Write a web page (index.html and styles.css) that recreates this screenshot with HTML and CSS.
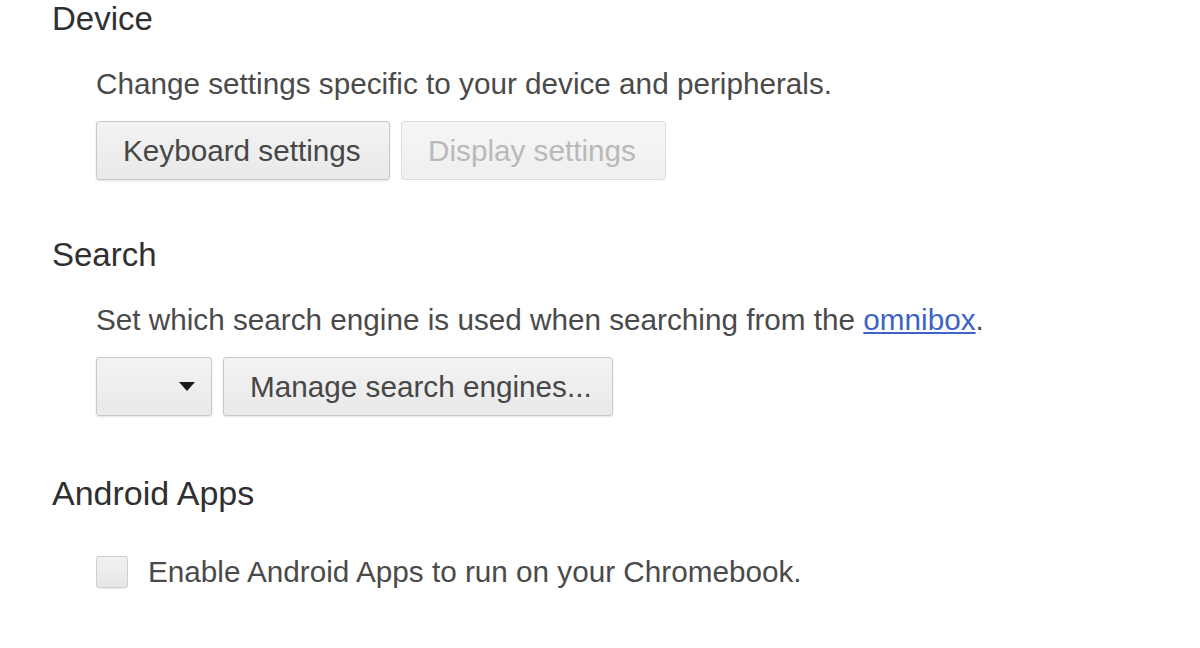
FILE: index.html
```html
<!DOCTYPE html>
<html lang="en">
<head>
    <meta charset="UTF-8">
    <title>Settings</title>
    <link rel="stylesheet" href="styles.css">
</head>
<body>
    <section class="settings-section">
        <h2>Device</h2>
        <div class="section-body">
            <div class="description">Change settings specific to your device and peripherals.</div>
            <div class="button-row">
                <button class="btn keyboard-btn">Keyboard settings</button>
                <button class="btn display-btn" disabled>Display settings</button>
            </div>
        </div>
    </section>

    <section class="settings-section search-section">
        <h2>Search</h2>
        <div class="section-body">
            <div class="description">Set which search engine is used when searching from the <a href="#">omnibox</a>.</div>
            <div class="button-row">
                <div class="btn select-box"><span class="arrow"></span></div>
                <button class="btn manage-btn">Manage search engines...</button>
            </div>
        </div>
    </section>

    <section class="settings-section android-section">
        <h2>Android Apps</h2>
        <div class="section-body">
            <label class="checkbox-row">
                <span class="checkbox"></span>
                <span>Enable Android Apps to run on your Chromebook.</span>
            </label>
        </div>
    </section>
</body>
</html>
```

FILE: styles.css
```css
body {
    font-family: 'Liberation Sans', Arial, sans-serif;
    margin: 0;
    padding: 0 0 0 52px;
    background-color: #fff;
    color: #4a4a4a;
}

h2 {
    margin: 0;
    font-size: 33px;
    font-weight: normal;
    line-height: 38px;
    color: #303030;
}

.search-section {
    margin-top: 56px;
}

.android-section {
    margin-top: 58px;
}

.android-section h2 {
    font-size: 34px;
}

.section-body {
    padding-left: 44px;
}

.description {
    font-size: 29.7px;
    line-height: 36px;
    margin-top: 28px;
}

.description a {
    color: #3d63c6;
    text-decoration: underline;
}

.button-row {
    display: flex;
    gap: 11px;
    margin-top: 19px;
}

.btn {
    font-family: inherit;
    font-size: 29.7px;
    height: 59px;
    padding: 0 26px;
    color: #474747;
    white-space: nowrap;
    background: linear-gradient(#f3f3f3, #e9e9e9);
    border: 1px solid #c9c9c9;
    border-radius: 3px;
    box-shadow: 0 1px 2px rgba(0, 0, 0, 0.12);
    display: flex;
    align-items: center;
    box-sizing: border-box;
}

.keyboard-btn {
    width: 294px;
}

.display-btn {
    width: 265px;
    color: #b9b9b9;
    background: linear-gradient(#f6f6f6, #efefef);
    border-color: #dcdcdc;
    box-shadow: none;
}

.select-box {
    width: 116px;
    justify-content: flex-end;
    padding-right: 16px;
}

.arrow {
    width: 0;
    height: 0;
    border-left: 8px solid transparent;
    border-right: 8px solid transparent;
    border-top: 9px solid #1a1a1a;
}

.manage-btn {
    width: 390px;
}

.checkbox-row {
    display: flex;
    align-items: center;
    gap: 20px;
    margin-top: 42px;
    font-size: 29.7px;
    line-height: 36px;
}

.checkbox {
    width: 32px;
    height: 32px;
    box-sizing: border-box;
    border: 1px solid #cfcfcf;
    border-radius: 3px;
    background: linear-gradient(#f2f2f2, #e6e6e6);
    box-shadow: 0 1px 1px rgba(0, 0, 0, 0.08);
}
```
